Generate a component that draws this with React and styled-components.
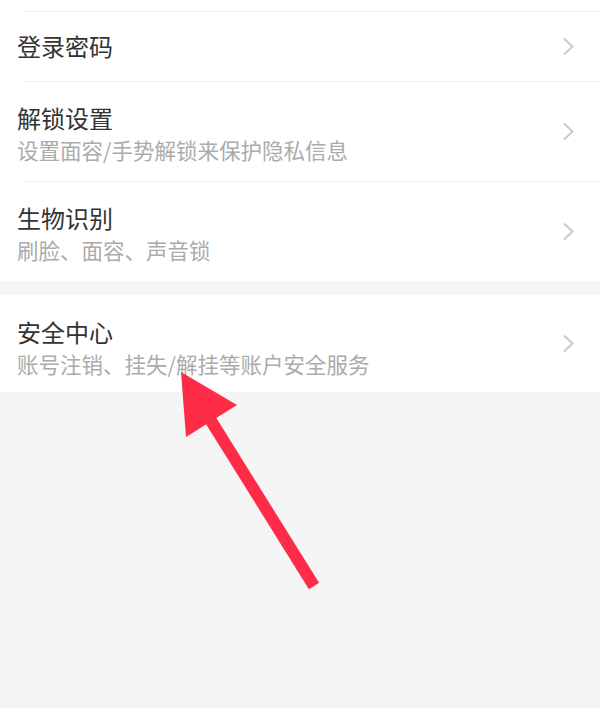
import React from 'react';
import styled, { createGlobalStyle } from 'styled-components';

const GlobalStyle = createGlobalStyle`
  body {
    margin: 0;
    background: #f5f5f5;
    font-family: "Noto Sans CJK SC", "Noto Sans", sans-serif;
  }
`;

const groups = [
  [
    { title: '登录密码' },
    { title: '解锁设置', desc: '设置面容/手势解锁来保护隐私信息' },
    { title: '生物识别', desc: '刷脸、面容、声音锁' },
  ],
  [{ title: '安全中心', desc: '账号注销、挂失/解挂等账户安全服务', short: true }],
];

const Chevron = () => (
  <svg width="13" height="19" viewBox="0 0 13 19">
    <polyline
      points="2,1.5 10.5,9.5 2,17.5"
      fill="none"
      stroke="#c9c9c9"
      strokeWidth="2"
    />
  </svg>
);

const App = () => {
  return (
    <Page>
      <GlobalStyle />
      {groups.map((rows, gi) => (
        <Group key={gi} first={gi === 0}>
          {gi === 0 && <Stub />}
          {rows.map((row, i) => (
            <Row
              key={row.title}
              divider={gi === 0}
              tall={!!row.desc}
              short={row.short}
            >
              <Texts>
                <Title>{row.title}</Title>
                {row.desc && <Desc>{row.desc}</Desc>}
              </Texts>
              <Chevron />
            </Row>
          ))}
        </Group>
      ))}

      <Pointer viewBox="0 0 600 708" width="600" height="708">
        <line
          x1="203"
          y1="408"
          x2="314"
          y2="586"
          stroke="#fe2c46"
          strokeWidth="12"
        />
        <polygon points="181,372 237,405 186,437" fill="#fe2c46" />
      </Pointer>
    </Page>
  );
};

export default App;

const Page = styled.div`
  position: relative;
  min-height: 708px;
  overflow: hidden;
  background: #f5f5f5;
`;

const Group = styled.div`
  background: #ffffff;
  margin-top: ${p => (p.first ? '0' : '14px')};
`;

const Stub = styled.div`
  height: 11px;
`;

const Row = styled.div`
  position: relative;
  display: flex;
  align-items: ${p => (p.tall ? 'flex-start' : 'center')};
  justify-content: space-between;
  box-sizing: border-box;
  height: ${p => (p.short ? '97px' : p.tall ? '100px' : '70px')};
  padding: ${p => (p.tall ? '23px 25px 0 17px' : '0 25px 0 17px')};

  svg {
    align-self: center;
    margin-top: ${p => (p.tall ? '-23px' : '0')};
  }

  &::before {
    content: '';
    display: ${p => (p.divider ? 'block' : 'none')};
    position: absolute;
    top: 0;
    left: 24px;
    right: 0;
    height: 1px;
    background: #eeeeee;
  }
`;

const Texts = styled.div`
  display: flex;
  flex-direction: column;
  gap: 4px;
`;

const Title = styled.div`
  font-size: 24px;
  line-height: 28px;
  color: #333333;
`;

const Desc = styled.div`
  font-size: 21.5px;
  line-height: 28px;
  color: #ababab;
`;

const Pointer = styled.svg`
  position: absolute;
  top: 0;
  left: 0;
  pointer-events: none;
`;
